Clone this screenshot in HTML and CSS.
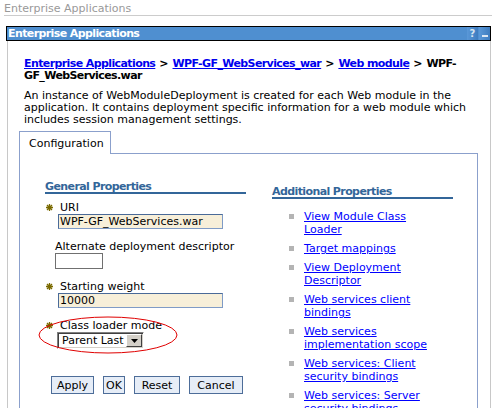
FILE: index.html
```html
<!DOCTYPE html>
<html lang="en">
<head>
    <meta charset="UTF-8">
    <title>Enterprise Applications</title>
    <link rel="stylesheet" href="styles.css">
</head>
<body>
    <div class="page-title">Enterprise Applications</div>

    <div class="portlet">
        <div class="portlet-bar">
            <span class="portlet-title">Enterprise Applications</span>
            <span class="bar-icons">
                <span class="bar-btn help">?</span>
                <span class="bar-btn min"><span class="min-line"></span></span>
            </span>
        </div>

        <div class="portlet-body">
            <p class="crumbs"><a href="#">Enterprise Applications</a><span class="sep">&gt;</span><a href="#">WPF-GF_WebServices_war</a><span class="sep">&gt;</span><a href="#">Web module</a><span class="sep">&gt;</span><span class="current">WPF-</span><wbr><span class="current">GF_WebServices.war</span></p>
            <p class="desc">An instance of WebModuleDeployment is created for each Web module in the application. It contains deployment specific information for a web module which includes session management settings.</p>

            <div class="tab-strip">
                <div class="tab">Configuration</div>
                <div class="tab-fill"></div>
            </div>

            <div class="tab-panel">
                <div class="col-general">
                    <h2 class="section-head">General Properties</h2>

                    <div class="field">
                        <label class="label req"><svg class="star" viewBox="0 0 7 7"><path d="M3.5 0v7M0 3.5h7M1 1l5 5M6 1l-5 5"/></svg>URI</label>
                        <input class="text-input wide" type="text" value="WPF-GF_WebServices.war">
                    </div>

                    <div class="field">
                        <label class="label plain">Alternate deployment descriptor</label>
                        <input class="text-input small" type="text" value="">
                    </div>

                    <div class="field">
                        <label class="label req"><svg class="star" viewBox="0 0 7 7"><path d="M3.5 0v7M0 3.5h7M1 1l5 5M6 1l-5 5"/></svg>Starting weight</label>
                        <input class="text-input wide" type="text" value="10000">
                    </div>

                    <div class="field marked">
                        <label class="label req"><svg class="star" viewBox="0 0 7 7"><path d="M3.5 0v7M0 3.5h7M1 1l5 5M6 1l-5 5"/></svg>Class loader mode</label>
                        <div class="select">
                            <span class="select-value">Parent Last</span>
                            <span class="select-arrow"><svg viewBox="0 0 7 4"><path d="M0 0h7L3.5 4z"/></svg></span>
                        </div>
                        <svg class="mark" viewBox="0 0 140 38"><ellipse cx="70" cy="19" rx="69" ry="18"/></svg>
                    </div>

                    <div class="buttons">
                        <button class="btn btn-apply">Apply</button>
                        <button class="btn btn-ok">OK</button>
                        <button class="btn btn-reset">Reset</button>
                        <button class="btn btn-cancel">Cancel</button>
                    </div>
                </div>

                <div class="col-additional">
                    <h2 class="section-head">Additional Properties</h2>
                    <ul class="link-list">
                        <li><span class="bullet"></span><a href="#">View Module Class Loader</a></li>
                        <li><span class="bullet"></span><a href="#">Target mappings</a></li>
                        <li><span class="bullet"></span><a href="#">View Deployment Descriptor</a></li>
                        <li><span class="bullet"></span><a href="#">Web services client bindings</a></li>
                        <li><span class="bullet"></span><a href="#">Web services implementation scope</a></li>
                        <li><span class="bullet"></span><a href="#">Web services: Client security bindings</a></li>
                        <li><span class="bullet"></span><a href="#">Web services: Server security bindings</a></li>
                    </ul>
                </div>
            </div>
        </div>
    </div>
</body>
</html>
```

FILE: styles.css
```css
* {
    margin: 0;
    padding: 0;
    box-sizing: border-box;
}

html, body {
    overflow: hidden;
}

body {
    font-family: "DejaVu Sans", Verdana, sans-serif;
    font-size: 11px;
    color: #000;
    background: #fff;
}

.page-title {
    margin: 0 4px;
    padding-top: 2px;
    line-height: 13px;
    color: #999;
    border-bottom: 1px solid #ccc;
}

.portlet {
    margin: 10px 5px 0 6px;
}

.portlet-bar {
    display: flex;
    justify-content: space-between;
    height: 15px;
    padding-left: 1px;
    border: 1px solid #000;
    background: #4f8fd0;
    line-height: 13px;
}

.portlet-title {
    color: #fff;
    font-weight: bold;
    letter-spacing: -0.6px;
}

.bar-icons {
    display: flex;
    gap: 1px;
}

.bar-btn {
    width: 11px;
    height: 13px;
    background: linear-gradient(to right, #5a98d8, #3e7cbf);
    color: #d8e4f0;
    font-weight: bold;
    font-size: 10px;
    text-align: center;
    display: flex;
    align-items: flex-end;
    justify-content: center;
}

.min-line {
    width: 6px;
    height: 2px;
    margin-bottom: 3px;
    background: #dbe6f2;
}

.portlet-body {
    margin-left: 1px;
    border-left: 1px solid #c8c8c8;
    border-right: 1px solid #c8c8c8;
    padding: 17px 12px 0 11px;
}

.crumbs {
    margin-left: 5px;
    line-height: 12px;
    font-weight: bold;
}

.crumbs a,
.crumbs .current {
    letter-spacing: -0.6px;
}

.crumbs a {
    color: #0000ee;
}

.crumbs .sep {
    display: inline-block;
    padding: 0 4px;
}

.desc {
    margin: 8px 0 0 5px;
    line-height: 12px;
}

.tab-strip {
    display: flex;
    margin-top: 5px;
}

.tab {
    width: 92px;
    padding: 6px 0 4px 9px;
    line-height: 12px;
    border: 1px solid #8ba0cc;
    border-bottom: none;
}

.tab-fill {
    flex: 1;
    border-bottom: 1px solid #8ba0cc;
}

.tab-panel {
    display: flex;
    gap: 26px;
    padding: 27px 0 30px 25px;
    border-left: 1px solid #8ba0cc;
    border-right: 1px solid #8ba0cc;
}

.section-head {
    font-size: 11px;
    line-height: 11px;
    font-weight: bold;
    letter-spacing: -0.6px;
    color: #336699;
    border-bottom: 2px solid #336699;
}

.col-general {
    width: 201px;
}

.col-additional {
    width: 181px;
    margin-top: 5px;
}

.field {
    margin-top: 12px;
}

.col-general .section-head + .field {
    margin-top: 8px;
}

.label {
    display: block;
    line-height: 12px;
}

.label.req {
    padding-left: 1px;
}

.label.plain {
    padding-left: 10px;
}

.star {
    width: 7px;
    height: 7px;
    margin-right: 7px;
    vertical-align: 0;
    stroke: #7a6a00;
    stroke-width: 1.3;
}

.text-input {
    display: block;
    height: 15px;
    padding: 0 1px;
    font-family: inherit;
    font-size: 11px;
    color: #000;
    outline: none;
}

.text-input.wide {
    width: 165px;
    margin-left: 13px;
    background: #f7efd9;
    border: 1px solid #7f9bc6;
    border-top-color: #4a6a98;
    border-left-color: #4a6a98;
}

.text-input.small {
    width: 48px;
    height: 16px;
    margin-left: 10px;
    background: #fff;
    border: 1px solid #707070;
}

.marked {
    position: relative;
}

.select {
    display: flex;
    align-items: center;
    width: 87px;
    height: 17px;
    margin-left: 12px;
    padding: 0 1px 0 3px;
    background: #fff;
    border: 1px solid;
    border-color: #808080 #fff #fff #808080;
    box-shadow: inset 1px 1px #404040, inset -1px -1px #d4d0c8;
}

.select-value {
    flex: 1;
    padding-left: 1px;
}

.select-arrow {
    display: flex;
    align-items: center;
    justify-content: center;
    width: 16px;
    height: 13px;
    background: #d4d0c8;
    border: 1px solid;
    border-color: #fff #404040 #404040 #fff;
}

.select-arrow svg {
    width: 7px;
    height: 4px;
    fill: #000;
}

.mark {
    position: absolute;
    left: -7px;
    top: -4px;
    width: 140px;
    height: 38px;
    fill: none;
    stroke: #e00000;
    stroke-width: 1;
}

.buttons {
    display: flex;
    gap: 9px;
    margin: 27px 0 0 6px;
}

.btn {
    height: 18px;
    padding: 0;
    font-family: inherit;
    font-size: 11px;
    color: #000;
    background: #e6edf7;
    border: 1px solid #4d6d99;
}

.btn-apply { width: 43px; }
.btn-ok { width: 22px; }
.btn-reset { width: 46px; }
.btn-cancel { width: 54px; }

.link-list {
    list-style: none;
    margin-top: 11px;
}

.link-list li {
    display: flex;
    align-items: flex-start;
    margin-bottom: 6px;
    line-height: 13px;
}

.bullet {
    width: 5px;
    height: 5px;
    margin: 4px 10px 0 17px;
    background: #b4b4b4;
}

.link-list a {
    width: 130px;
    color: #0000ff;
}
```
